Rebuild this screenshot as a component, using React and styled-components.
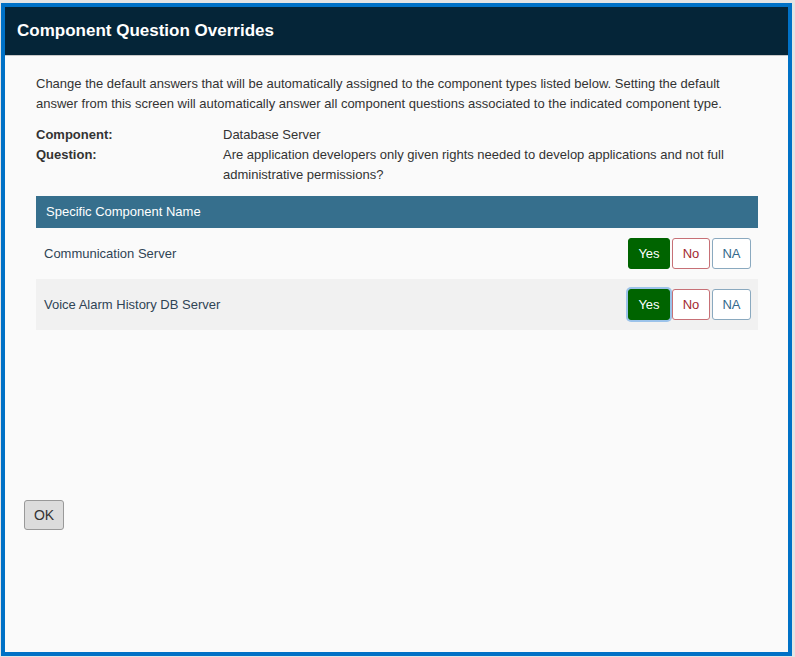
import React from 'react'
import styled, { createGlobalStyle } from 'styled-components'

const GlobalStyle = createGlobalStyle`
  html, body {
    margin: 0;
    padding: 0;
    height: 100%;
    background: #e4e4e4;
  }
  #root {
    height: 100%;
  }
  * {
    box-sizing: border-box;
  }
`

const Frame = styled.div`
  display: flex;
  flex-direction: column;
  height: 653px;
  margin: 3px 3px 1px 1px;
  border: 4px solid #0071c6;
  background: #fafafa;
  font-family: 'Liberation Sans', Arial, sans-serif;
  color: #333;
`

const Header = styled.div`
  height: 49px;
  display: flex;
  align-items: center;
  padding: 0 12px;
  background: #052538;
  border-bottom: 1px solid #c8c8c8;
  color: #fff;
  font-size: 17px;
  font-weight: bold;
`

const Body = styled.div`
  height: 434px;
  padding: 18px 30px 0 31px;
  font-size: 13px;
  line-height: 20px;
`

const Intro = styled.p`
  margin: 0 0 11px;
`

const Details = styled.div`
  display: grid;
  grid-template-columns: 187px 1fr;
  margin-bottom: 11px;
`

const Label = styled.div`
  font-weight: bold;
`

const Table = styled.div`
  display: flex;
  flex-direction: column;
`

const TableHead = styled.div`
  height: 32px;
  display: flex;
  align-items: center;
  padding: 0 10px;
  background: #366f8d;
  color: #fff;
  font-size: 13px;
`

const Row = styled.div`
  height: 51px;
  display: flex;
  align-items: center;
  justify-content: space-between;
  padding: 0 7px 0 8px;
  background: ${({ $alt }) => ($alt ? '#f1f1f1' : 'transparent')};
  color: #2f4455;
`

const Choices = styled.div`
  display: flex;
  gap: 2px;
`

const palette = {
  yes: { bg: '#006400', border: '#006400', fg: '#fff' },
  no: { bg: '#fff', border: '#c77076', fg: '#a3282f' },
  na: { bg: '#fff', border: '#8aa9bf', fg: '#33698c' },
}

const Choice = styled.button`
  height: 31px;
  width: ${({ $w }) => $w}px;
  padding: 0;
  border-radius: 3px;
  border: 1px solid ${({ $kind }) => palette[$kind].border};
  background: ${({ $kind }) => palette[$kind].bg};
  color: ${({ $kind }) => palette[$kind].fg};
  font-family: inherit;
  font-size: 13px;
  box-shadow: ${({ $focus }) => ($focus ? '0 0 0 2px #9cc3ea' : 'none')};
`

const Footer = styled.div`
  padding: 10px 19px;
`

const OkButton = styled.button`
  width: 40px;
  height: 30px;
  border: 1px solid #999;
  border-radius: 3px;
  background: #dcdcdc;
  color: #333;
  font-family: inherit;
  font-size: 14px;
`

const rows = [
  { name: 'Communication Server', focus: false },
  { name: 'Voice Alarm History DB Server', focus: true },
]

export default function App() {
  return (
    <>
      <GlobalStyle />
      <Frame>
        <Header>Component Question Overrides</Header>
        <Body>
          <Intro>
            Change the default answers that will be automatically assigned to the component types listed below.
            Setting the default answer from this screen will automatically answer all component questions
            associated to the indicated component type.
          </Intro>
          <Details>
            <Label>Component:</Label>
            <div>Database Server</div>
            <Label>Question:</Label>
            <div>
              Are application developers only given rights needed to develop applications and not full
              administrative permissions?
            </div>
          </Details>
          <Table>
            <TableHead>Specific Component Name</TableHead>
            {rows.map((r, i) => (
              <Row key={r.name} $alt={i % 2 === 1}>
                <span>{r.name}</span>
                <Choices>
                  <Choice $kind="yes" $w={42} $focus={r.focus}>Yes</Choice>
                  <Choice $kind="no" $w={38}>No</Choice>
                  <Choice $kind="na" $w={39}>NA</Choice>
                </Choices>
              </Row>
            ))}
          </Table>
        </Body>
        <Footer>
          <OkButton>OK</OkButton>
        </Footer>
      </Frame>
    </>
  )
}
